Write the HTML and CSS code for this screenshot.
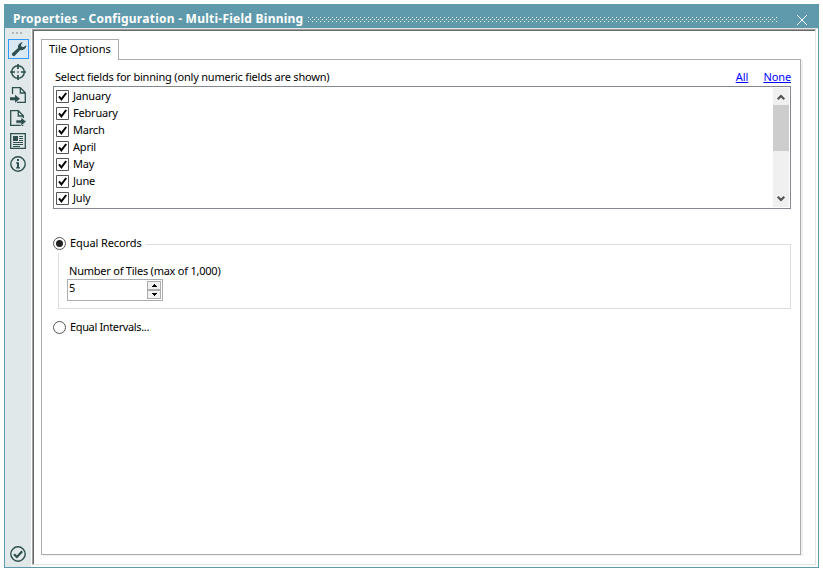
FILE: index.html
```html
<!DOCTYPE html>
<html lang="en">
<head>
<meta charset="utf-8">
<title>Properties</title>
<link rel="stylesheet" href="styles.css">
</head>
<body>
<div class="window">
  <header class="titlebar">
    <h1>Properties - Configuration - Multi-Field Binning</h1>
    <svg class="grip" height="5"><defs><pattern id="dots" width="4" height="4" patternUnits="userSpaceOnUse"><path fill="#fff" d="M0 0h1v1H0zM2 2h1v1H2z"/></pattern></defs><rect width="100%" height="5" fill="url(#dots)"/></svg>
    <svg class="close" width="12" height="12" viewBox="0 0 12 12"><path d="M1 1l10 10M11 1L1 11" stroke="#fff" stroke-width="1"/></svg>
  </header>
  <div class="body">
    <nav class="side">
      <div class="handle"><i></i><i></i><i></i></div>
      <div class="tool active"><svg viewBox="0 0 16 16"><path fill="#2f4f4f" d="M1.200 12.200 7.100 7C6.500 4.800 8 1.500 11.800 1.200L10 3.800 10.500 5.700 12.600 6.100 15.300 4.300C15.500 7.700 12 9.800 9.200 9L3.800 14.800C2.600 16 0 13.700 1.200 12.200z"/></svg></div>
      <div class="tool"><svg viewBox="0 0 16 16" fill="none" stroke="#2f4f4f"><circle cx="8" cy="8" r="6.300" stroke-width="1.500"/><path d="M8 0v5M8 11v5M0 8h5M11 8h5" stroke-width="1.700"/><path d="M7.300 8h1.400" stroke-width="1.400"/></svg></div>
      <div class="tool"><svg viewBox="0 0 16 16"><path d="M2.500 7V.7h7.800l5 5v9.600H7M10.300 1v5h5" fill="none" stroke="#2f4f4f" stroke-width="1.300"/><path fill="#2f4f4f" d="M0 10.200h5V7.700l5 4-5 4v-2.500H0z"/></svg></div>
      <div class="tool"><svg viewBox="0 0 16 16"><path d="M13.300 15.300H.7V.7h7.600l5 5V8M8.300 1v5h5" fill="none" stroke="#2f4f4f" stroke-width="1.300"/><path fill="#2f4f4f" stroke="#e0e8ea" stroke-width=".6" d="M6 10h5V7.300l5.300 4.300-5.300 4.300v-2.700H6z"/></svg></div>
      <div class="tool"><svg viewBox="0 0 16 16"><path d="M.7.700h14.600v14.600H.7z" fill="none" stroke="#2f4f4f" stroke-width="1.300"/><path fill="#2f4f4f" d="M3 3h5v5H3zM9 3h4v1H9zM9 5h4v1H9zM9 7h4v1H9zM3 9h10v1H3zM3 11h10v1H3zM3 13h7v1H3z"/></svg></div>
      <div class="tool"><svg viewBox="0 0 16 16"><circle cx="8" cy="8" r="7.200" fill="none" stroke="#2f4f4f" stroke-width="1.400"/><path fill="#2f4f4f" d="M7 3h2v2H7zM6 6.200h3v5h1V12.500H6v-1.300h1V7.400H6z"/></svg></div>
      <div class="tool last"><svg viewBox="0 0 16 16"><circle cx="8" cy="8" r="7.200" fill="none" stroke="#2f4f4f" stroke-width="1.400"/><path d="M4 8.200l2.900 2.800L12.200 5.300" fill="none" stroke="#2f4f4f" stroke-width="2.200"/></svg></div>
    </nav>
    <main class="panel">
      <div class="tab">Tile Options</div>
      <section class="page">
        <div class="caption"><span class="prompt">Select fields for binning (only numeric fields are shown)</span><a href="#">All</a><a href="#" class="none">None</a></div>
        <div class="list">
          <div class="rows">
            <label><svg class="check" viewBox="0 0 13 13"><use href="#tick"/></svg><span>January</span></label>
            <label><svg class="check" viewBox="0 0 13 13"><use href="#tick"/></svg><span>February</span></label>
            <label><svg class="check" viewBox="0 0 13 13"><use href="#tick"/></svg><span>March</span></label>
            <label><svg class="check" viewBox="0 0 13 13"><use href="#tick"/></svg><span>April</span></label>
            <label><svg class="check" viewBox="0 0 13 13"><use href="#tick"/></svg><span>May</span></label>
            <label><svg class="check" viewBox="0 0 13 13"><use href="#tick"/></svg><span>June</span></label>
            <label><svg class="check" viewBox="0 0 13 13"><use href="#tick"/></svg><span>July</span></label>
          </div>
          <div class="scroll">
            <svg viewBox="0 0 16 17"><path d="M4.700 11.300 8 8l3.300 3.300" fill="none" stroke="#505050" stroke-width="2"/></svg>
            <div class="thumb"></div>
            <svg class="down" viewBox="0 0 16 17"><path d="M4.700 6.700 8 10l3.300-3.300" fill="none" stroke="#505050" stroke-width="2"/></svg>
          </div>
        </div>
        <div class="option first"><svg class="radio" viewBox="0 0 13 13"><circle cx="6.500" cy="6.500" r="6" fill="#fff" stroke="#555"/><circle cx="6.500" cy="6.500" r="3.500" fill="#222"/></svg><span class="records">Equal Records</span><i class="rule"></i></div>
        <div class="group">
          <div class="count">Number of Tiles (max of 1,000)</div>
          <div class="spinner"><span>5</span><div class="buttons"><b><svg viewBox="0 0 12 7"><path d="M6 2h1v1h1v1h1v1H4V4h1V3h1z"/></svg></b><b><svg viewBox="0 0 12 7"><path d="M4 2h5v1H8v1H7v1H6V4H5V3H4z"/></svg></b></div></div>
        </div>
        <div class="option second"><svg class="radio" viewBox="0 0 13 13"><circle cx="6.500" cy="6.500" r="6" fill="#fff" stroke="#555"/></svg><span class="intervals">Equal Intervals...</span></div>
      </section>
    </main>
  </div>
</div>
<svg class="defs" width="0" height="0"><defs><g id="tick"><path d="M.5.500h12v12H.5z" fill="#fff" stroke="#555"/><path d="M3 6.300l2.400 3L10.200 3" fill="none" stroke="#000" stroke-width="2"/></g></defs></svg>
</body>
</html>
```

FILE: styles.css
```css
* { box-sizing: border-box; }
body { margin: 0; padding: 4px; height: 572px; overflow: hidden; background: #fff; color: #000; font: 11px/17px "Noto Sans", sans-serif; }
svg { display: block; flex: none; }
.defs { display: none; }
.window { width: 815px; height: 564px; border: 1px solid #5f9aac; border-top: 0; display: flex; flex-direction: column; }
.titlebar { height: 24px; margin: 0 -1px; padding-left: 9px; background: #5f9aac; display: flex; flex: none; }
h1 { width: 290px; margin: 3px 5px 0 0; color: #fff; font: bold 12px/24px "Noto Sans", sans-serif; letter-spacing: .25px; white-space: nowrap; }
.grip { width: 470px; margin-top: 13px; }
.close { margin: 10px 0 0 18px; }
.body { flex: 1; display: flex; border-top: 1px solid #e3e3e3; min-height: 0; }
.side { width: 26px; padding: 3px 3px 0; background: #e0e8ea; display: flex; flex-direction: column; }
.handle { height: 7px; display: flex; gap: 2px; padding: 0 0 0 4px; }
.handle i { width: 2px; height: 2px; background: #b0b5b6; }
.tool { width: 21px; height: 20px; margin-bottom: 3px; padding: 2px 0 0 2px; flex: none; }
.tool svg { width: 16px; height: 16px; }
.active { border: 1px solid #3399ff; background: #dae8f1; padding: 1px 0 0 2px; }
.last { margin-top: auto; }
.panel { width: 784px; height: 536px; border: 1px solid #e3e3e3; border-left-color: #a0a0a0; border-top-color: #a0a0a0; box-shadow: inset 1px 1px #696969; padding: 9px 0 0 8px; margin-left: 1px; flex: none; }
.tab { width: 78px; height: 21px; border: 1px solid #acacac; border-bottom: 0; background: #fff; line-height: 18px; padding-left: 7px; position: relative; white-space: nowrap; }
.page { width: 760px; height: 496px; margin-top: -1px; border: 1px solid #acacac; box-shadow: 2px 1px #f0f0f0; padding: 8px 9px 0 11px; }
.caption { height: 18px; padding-left: 2px; display: flex; white-space: nowrap; }
.prompt { flex: 1; letter-spacing: -.19px; }
a { color: #00f; text-underline-offset: 1px; }
.none { margin-left: 15px; letter-spacing: -.1px; }
.list { height: 123px; border: 1px solid #828790; padding: 1px; display: flex; justify-content: space-between; }
.rows { padding-left: 1px; }
.rows label { display: flex; align-items: center; height: 17px; gap: 4px; letter-spacing: -.2px; }
.rows span { margin-top: -2px; }
.check, .radio { width: 13px; height: 13px; }
.scroll { width: 16px; background: #f0f0f0; display: flex; flex-direction: column; }
.scroll svg { width: 16px; height: 17px; }
.thumb { height: 46px; background: #cdcdcd; }
.down { margin-top: auto; }
.option { display: flex; align-items: center; height: 17px; gap: 4px; white-space: nowrap; }
.option span { margin-top: -2px; }
.first { margin-top: 26px; }
.records { width: 72px; letter-spacing: -.1px; }
.intervals { letter-spacing: -.36px; }
.rule { flex: 1; height: 1px; background: #dcdcdc; margin-top: 2px; }
.group { height: 65px; margin: -8px 0 0 5px; border-right: 1px solid #dcdcdc; border-bottom: 1px solid #dcdcdc; padding: 18px 0 0 9px; background: linear-gradient(#dcdcdc, #dcdcdc) 0 100% / 1px 55px no-repeat; }
.count { margin-left: 2px; height: 17px; letter-spacing: -.23px; }
.spinner { width: 96px; height: 22px; border: 1px solid #abadb3; padding: 1px; display: flex; justify-content: space-between; }
.spinner span { line-height: 14px; }
.buttons { width: 14px; display: flex; flex-direction: column; }
.buttons b { height: 9px; border: 1px solid #acacac; background: #f0f0f0; }
.buttons svg { width: 12px; height: 7px; }
.second { margin-top: 10px; }
```
